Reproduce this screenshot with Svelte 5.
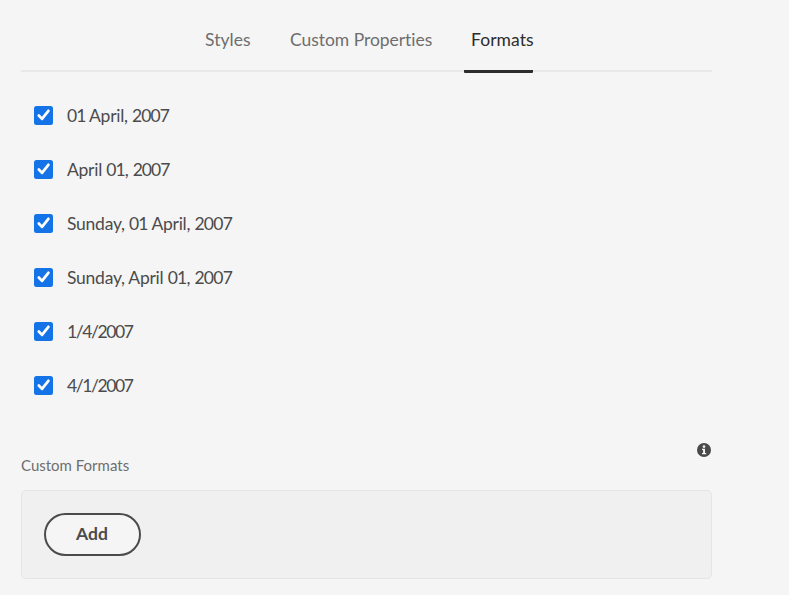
<script>
  const tabs = [
    { label: 'Styles', space: '0.05px' },
    { label: 'Custom Properties', space: '-0.04px' },
    { label: 'Formats', space: '0.05px', active: true }
  ];
  const formats = [
    { label: '01 April, 2007', letters: '-0.25px', digits: '-0.95px' },
    { label: 'April 01, 2007', letters: '-0.25px', digits: '-0.95px' },
    { label: 'Sunday, 01 April, 2007', letters: '-0.25px', digits: '-0.75px' },
    { label: 'Sunday, April 01, 2007', letters: '-0.25px', digits: '-0.75px' },
    { label: '1/4/2007', letters: '-1.5px', digits: '-1.35px' },
    { label: '4/1/2007', letters: '-1.5px', digits: '-1.35px' }
  ];
  const parts = (label) => label.split(/(\d+)/).filter(Boolean);
</script>

<main>
  <nav>
    {#each tabs as tab}
      <div class="tab" class:active={tab.active}>
        <span style:letter-spacing={tab.space}>{tab.label}</span>
      </div>
    {/each}
  </nav>
  <div class="formats">
    {#each formats as format}
      <div class="option">
        <svg width="19" height="19" viewBox="0 0 19 19">
          <rect width="19" height="19" rx="2.5" fill="#1473e6" />
          <path d="M4.8 9.5 8 12.9 14.4 4.8" fill="none" stroke="#fff" stroke-width="2.7" stroke-linecap="round" stroke-linejoin="round" />
        </svg>
        <span class="label">{#each parts(format.label) as part}<span style:letter-spacing={/\d/.test(part) ? format.digits : format.letters}>{part}</span>{/each}</span>
      </div>
    {/each}
  </div>
  <div class="heading">
    <span>Custom Formats</span>
    <svg width="14" height="14" viewBox="0 0 14 14">
      <circle cx="7" cy="7" r="7" fill="#494949" />
      <circle cx="7" cy="3.6" r="1.3" fill="#f5f5f5" />
      <path d="M5 5.8H8V10H9.2V11.2H5V10H6.1V7H5Z" fill="#f5f5f5" />
    </svg>
  </div>
  <section>
    <button><span>Add</span></button>
  </section>
</main>

<style>
  :global(body) {
    background: #f5f5f5;
  }
  main {
    box-sizing: border-box;
    width: 789px;
    height: 595px;
    padding: 0 77px 0 21px;
    font-family: Lato, sans-serif;
    color: #4b4b4b;
    overflow: hidden;
  }
  nav {
    box-sizing: border-box;
    height: 72px;
    border-bottom: 2px solid #e8e8e8;
    display: flex;
    padding-left: 177px;
    gap: 24px;
    font-size: 17.5px;
    color: #6e6e6e;
  }
  .tab {
    box-sizing: border-box;
    height: 73px;
    padding: 27px 0 0 7px;
    line-height: 26px;
    white-space: nowrap;
    width: 61px;
  }
  .tab:nth-child(2) {
    width: 157px;
  }
  .active {
    color: #2c2c2c;
    width: 69px;
    background: linear-gradient(#2c2c2c, #2c2c2c) bottom / 100% 3px no-repeat;
    border-radius: 1px;
  }
  .formats {
    padding: 17px 0 0 13px;
  }
  .option {
    height: 54px;
    display: flex;
    align-items: center;
    gap: 14px;
    font-size: 17.5px;
    line-height: 26px;
    white-space: nowrap;
  }
  .option svg {
    flex: none;
    margin-top: -1px;
  }
  .heading {
    display: flex;
    justify-content: space-between;
    height: 48px;
    margin-top: 29px;
    padding-right: 1px;
  }
  .heading span {
    padding-top: 12px;
    font-size: 15px;
    line-height: 22px;
    color: #6e6e6e;
  }
  .heading svg {
    margin-top: 1px;
  }
  section {
    box-sizing: border-box;
    height: 89px;
    padding: 22px;
    border: 1px solid #e5e5e5;
    border-radius: 5px;
    background: #f0f0f0;
  }
  button {
    box-sizing: border-box;
    display: block;
    width: 97px;
    height: 43px;
    padding: 0 1px 2px 0;
    border: 2px solid #4b4b4b;
    border-radius: 22px;
    background: #f5f5f5;
    color: #4b4b4b;
    font: bold 17.5px/37px Lato, sans-serif;
  }
</style>
